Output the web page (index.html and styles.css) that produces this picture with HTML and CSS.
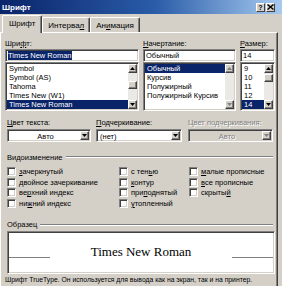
FILE: index.html
```html
<!DOCTYPE html>
<html>
  <head>
    <meta http-equiv="Content-Type" content="text/html;charset=UTF-8" />
    <title>Шрифт</title>
    <link rel="stylesheet" href="styles.css">
  </head>
  <body>
    <div class="dialog">
      <div class="titlebar">
        <span class="title">Шрифт</span>
        <div class="title_buttons">
          <span class="title_btn">?</span>
          <span class="title_btn">
            <svg width="7" height="6" viewBox="0 0 7 6"><path d="M0.5 0.5 L6.5 5.5 M6.5 0.5 L0.5 5.5" stroke="#000" stroke-width="1.4"/></svg>
          </span>
        </div>
      </div>

      <div class="tabs">
        <div class="tab _active">Шрифт</div>
        <div class="tab">Интерва<u>л</u></div>
        <div class="tab">Ан<u>и</u>мация</div>
      </div>

      <div class="panel">
        <!-- font / style / size -->
        <div class="pickers">
          <div class="picker picker_font">
            <div class="label">Шри<u>ф</u>т:</div>
            <div class="edit"><span class="sel">Times New Roman</span></div>
            <div class="list">
              <div class="items">
                <div class="item">Symbol</div>
                <div class="item">Symbol (AS)</div>
                <div class="item">Tahoma</div>
                <div class="item">Times New (W1)</div>
                <div class="item _selected">Times New Roman</div>
              </div>
              <div class="scroll">
                <div class="arrow"><svg width="5" height="3" viewBox="0 0 5 3"><path d="M0 3 L2.5 0 L5 3 Z" fill="#000"/></svg></div>
                <div class="track">
                  <div class="thumb thumb_font"></div>
                </div>
                <div class="arrow"><svg width="5" height="3" viewBox="0 0 5 3"><path d="M0 0 L5 0 L2.5 3 Z" fill="#000"/></svg></div>
              </div>
            </div>
          </div>

          <div class="picker picker_style">
            <div class="label"><u>Н</u>ачертание:</div>
            <div class="edit">Обычный</div>
            <div class="list">
              <div class="items">
                <div class="item _selected">Обычный</div>
                <div class="item">Курсив</div>
                <div class="item">Полужирный</div>
                <div class="item">Полужирный Курсив</div>
              </div>
              <div class="scroll">
                <div class="arrow"><svg width="5" height="3" viewBox="0 0 5 3"><path d="M0 3 L2.5 0 L5 3 Z" fill="#808080"/></svg></div>
                <div class="track"></div>
                <div class="arrow"><svg width="5" height="3" viewBox="0 0 5 3"><path d="M0 0 L5 0 L2.5 3 Z" fill="#808080"/></svg></div>
              </div>
            </div>
          </div>

          <div class="picker picker_size">
            <div class="label"><u>Р</u>азмер:</div>
            <div class="edit">14</div>
            <div class="list">
              <div class="items">
                <div class="item">9</div>
                <div class="item">10</div>
                <div class="item">11</div>
                <div class="item">12</div>
                <div class="item _selected">14</div>
              </div>
              <div class="scroll">
                <div class="arrow"><svg width="5" height="3" viewBox="0 0 5 3"><path d="M0 3 L2.5 0 L5 3 Z" fill="#000"/></svg></div>
                <div class="track">
                  <div class="thumb thumb_size"></div>
                </div>
                <div class="arrow"><svg width="5" height="3" viewBox="0 0 5 3"><path d="M0 0 L5 0 L2.5 3 Z" fill="#000"/></svg></div>
              </div>
            </div>
          </div>
        </div>

        <!-- colours and underline -->
        <div class="combos">
          <div class="combo_field combo_color">
            <div class="label"><u>Ц</u>вет текста:</div>
            <div class="combo">
              <span class="combo_text _center">Авто</span>
              <span class="combo_btn"><svg width="5" height="3" viewBox="0 0 5 3"><path d="M0 0 L5 0 L2.5 3 Z" fill="#000"/></svg></span>
            </div>
          </div>
          <div class="combo_field combo_underline">
            <div class="label"><u>П</u>одчеркивание:</div>
            <div class="combo">
              <span class="combo_text">(нет)</span>
              <span class="combo_btn"><svg width="5" height="3" viewBox="0 0 5 3"><path d="M0 0 L5 0 L2.5 3 Z" fill="#000"/></svg></span>
            </div>
          </div>
          <div class="combo_field combo_ucolor">
            <div class="label _disabled">Цвет подчеркивания:</div>
            <div class="combo _disabled">
              <span class="combo_text _center">Авто</span>
              <span class="combo_btn"><svg width="5" height="3" viewBox="0 0 5 3"><path d="M0 0 L5 0 L2.5 3 Z" fill="#808080"/></svg></span>
            </div>
          </div>
        </div>

        <!-- effects -->
        <div class="group_title"><span>Видоизменение</span></div>
        <div class="effects">
          <label class="check"><span class="box"></span><u>з</u>ачеркнутый</label>
          <label class="check"><span class="box"></span>с тен<u>ь</u>ю</label>
          <label class="check"><span class="box"></span><u>м</u>алые прописные</label>

          <label class="check"><span class="box"></span>двойное зачеркивание</label>
          <label class="check"><span class="box"></span><u>к</u>онтур</label>
          <label class="check"><span class="box"></span><u>в</u>се прописные</label>

          <label class="check"><span class="box"></span>ве<u>р</u>хний индекс</label>
          <label class="check"><span class="box"></span>при<u>п</u>однятый</label>
          <label class="check"><span class="box"></span>скрыты<u>й</u></label>

          <label class="check"><span class="box"></span>ни<u>ж</u>ний индекс</label>
          <label class="check"><span class="box"></span><u>у</u>топленный</label>
        </div>

        <!-- sample -->
        <div class="group_title group_sample"><span>Образец</span></div>
        <div class="sample">
          <div class="sample_line"></div>
          <div class="sample_text">Times New Roman</div>
          <div class="sample_line"></div>
        </div>
        <div class="note">Шрифт TrueType. Он используется для вывода как на экран, так и на принтер.</div>
      </div>
    </div>
  </body>
</html>
```

FILE: styles.css
```css
html {
  font-family: "Liberation Sans", Arial, sans-serif;
  font-size: 7.5px;
}
body {
  margin: 0;
  background-color: #d4d0c8;
  color: #000;
}
u {
  text-decoration-thickness: 1px;
  text-underline-offset: 1px;
}

.dialog {
  width: 282px;
  height: 286px;
  overflow: hidden;
  background-color: #d4d0c8;
}

/* title bar */
.titlebar {
  height: 14px;
  display: flex;
  align-items: center;
  justify-content: space-between;
  padding: 0 7px 0 2px;
  background: linear-gradient(to right, #0a246a 0%, #2a5ca8 55%, #a6caf0 100%);
}
.title {
  color: #fff;
  font-weight: bold;
  font-size: 8px;
}
.title_buttons {
  display: flex;
  gap: 1px;
}
.title_btn {
  width: 9px;
  height: 9px;
  box-sizing: border-box;
  display: flex;
  align-items: center;
  justify-content: center;
  background-color: #d4d0c8;
  border-top: 1px solid #fff;
  border-left: 1px solid #fff;
  border-right: 1px solid #404040;
  border-bottom: 1px solid #404040;
  font-size: 7px;
  font-weight: bold;
  line-height: 7px;
}

/* tabs */
.tabs {
  display: flex;
  align-items: flex-end;
  height: 18px;
  padding-left: 2px;
}
.tab {
  height: 15px;
  box-sizing: border-box;
  padding: 0 5px;
  display: flex;
  align-items: center;
  border-top: 1px solid #fff;
  border-left: 1px solid #fff;
  border-right: 1px solid #404040;
  box-shadow: inset -1px 0 #808080;
  border-radius: 2px 2px 0 0;
  font-size: 8px;
}
.tab._active {
  height: 18px;
  margin-bottom: -1px;
  position: relative;
  z-index: 1;
  background-color: #d4d0c8;
  padding: 0 6px 2px;
}

.panel {
  width: 278px;
  height: 260px;
  box-sizing: border-box;
  border-top: 1px solid #fff;
  border-left: 1px solid #fff;
  border-right: 1px solid #404040;
  box-shadow: inset -1px 0 #808080;
  padding: 6px 0 0 4px;
}

.label {
  height: 9px;
  line-height: 9px;
  white-space: nowrap;
}
.label._disabled {
  color: #808080;
  text-shadow: 1px 1px #fff;
}

/* pickers */
.pickers {
  display: flex;
}
.picker_font {
  width: 134px;
}
.picker_style {
  width: 93px;
  margin-left: 4px;
}
.picker_size {
  width: 35px;
  margin-left: 4px;
}
.picker .label {
  margin-bottom: 1px;
}

.edit,
.list,
.combo {
  box-sizing: border-box;
  background-color: #fff;
  border-top: 1px solid #808080;
  border-left: 1px solid #808080;
  border-right: 1px solid #fff;
  border-bottom: 1px solid #fff;
  box-shadow: inset 1px 1px #404040, inset -1px -1px #d4d0c8;
}
.edit {
  height: 13px;
  line-height: 11px;
  padding: 0 2px;
  white-space: nowrap;
}
.sel {
  background-color: #0a246a;
  color: #fff;
}
.list {
  height: 49px;
  display: flex;
  padding: 1px;
}
.items {
  flex: 1;
  overflow: hidden;
}
.item {
  height: 9px;
  line-height: 9px;
  padding-left: 2px;
  white-space: nowrap;
}
.item._selected {
  background-color: #0a246a;
  color: #fff;
}
.scroll {
  width: 9px;
  display: flex;
  flex-direction: column;
}
.arrow,
.thumb,
.combo_btn {
  box-sizing: border-box;
  background-color: #d4d0c8;
  border-top: 1px solid #fff;
  border-left: 1px solid #fff;
  border-right: 1px solid #404040;
  border-bottom: 1px solid #404040;
  box-shadow: inset -1px -1px #808080;
}
.arrow {
  height: 9px;
  display: flex;
  align-items: center;
  justify-content: center;
}
.track {
  flex: 1;
  background-color: #ebe9e5;
}
.thumb {
  height: 8px;
}
.thumb_font {
  margin-top: 8px;
}
.thumb_size {
  margin-top: 1px;
}

/* combos */
.combos {
  display: flex;
  margin: 7px 0 0 2px;
}
.combo_field .label {
  margin-bottom: 2px;
}
.combo_color {
  width: 84px;
}
.combo_underline {
  width: 86px;
  margin-left: 5px;
}
.combo_ucolor {
  width: 85px;
  margin-left: 6px;
}
.combo {
  height: 13px;
  display: flex;
  align-items: stretch;
  padding: 1px;
}
.combo._disabled {
  background-color: #d4d0c8;
}
.combo_text {
  flex: 1;
  line-height: 11px;
  padding-left: 2px;
}
.combo_text._center {
  text-align: center;
}
.combo._disabled .combo_text {
  color: #808080;
  text-shadow: 1px 1px #fff;
}
.combo_btn {
  width: 9px;
  display: flex;
  align-items: center;
  justify-content: center;
}

/* groups */
.group_title {
  display: flex;
  align-items: center;
  height: 10px;
  margin: 10px 4px 0 2px;
  white-space: nowrap;
}
.group_title::after {
  content: "";
  flex: 1;
  height: 0;
  margin-left: 3px;
  border-top: 1px solid #808080;
  border-bottom: 1px solid #fff;
}
.group_sample {
  margin-top: 11px;
}

.effects {
  display: grid;
  grid-template-columns: 112px 70px auto;
  grid-auto-rows: 10.7px;
  margin: 4px 0 0 2px;
}
.check {
  display: flex;
  align-items: center;
  white-space: nowrap;
}
.box {
  width: 9px;
  height: 9px;
  box-sizing: border-box;
  margin-right: 3px;
  background-color: #fff;
  border-top: 1px solid #808080;
  border-left: 1px solid #808080;
  border-right: 1px solid #fff;
  border-bottom: 1px solid #fff;
  box-shadow: inset 1px 1px #404040, inset -1px -1px #d4d0c8;
}

/* sample */
.sample {
  height: 43px;
  box-sizing: border-box;
  margin: 1px 0 0 2px;
  width: 268px;
  display: flex;
  align-items: center;
  justify-content: space-between;
  background-color: #fff;
  border-top: 1px solid #808080;
  border-left: 1px solid #808080;
  border-right: 1px solid #fff;
  border-bottom: 1px solid #fff;
  box-shadow: inset 1px 1px #404040, inset -1px -1px #d4d0c8;
  padding: 0 1px;
}
.sample_line {
  width: 41px;
  height: 1px;
  margin-top: 10px;
  background-color: #808080;
}
.sample_text {
  font-family: "Liberation Serif", "Times New Roman", serif;
  font-size: 13px;
}
.note {
  margin-top: 2px;
  font-size: 6.8px;
  line-height: 8px;
  white-space: nowrap;
}
```
